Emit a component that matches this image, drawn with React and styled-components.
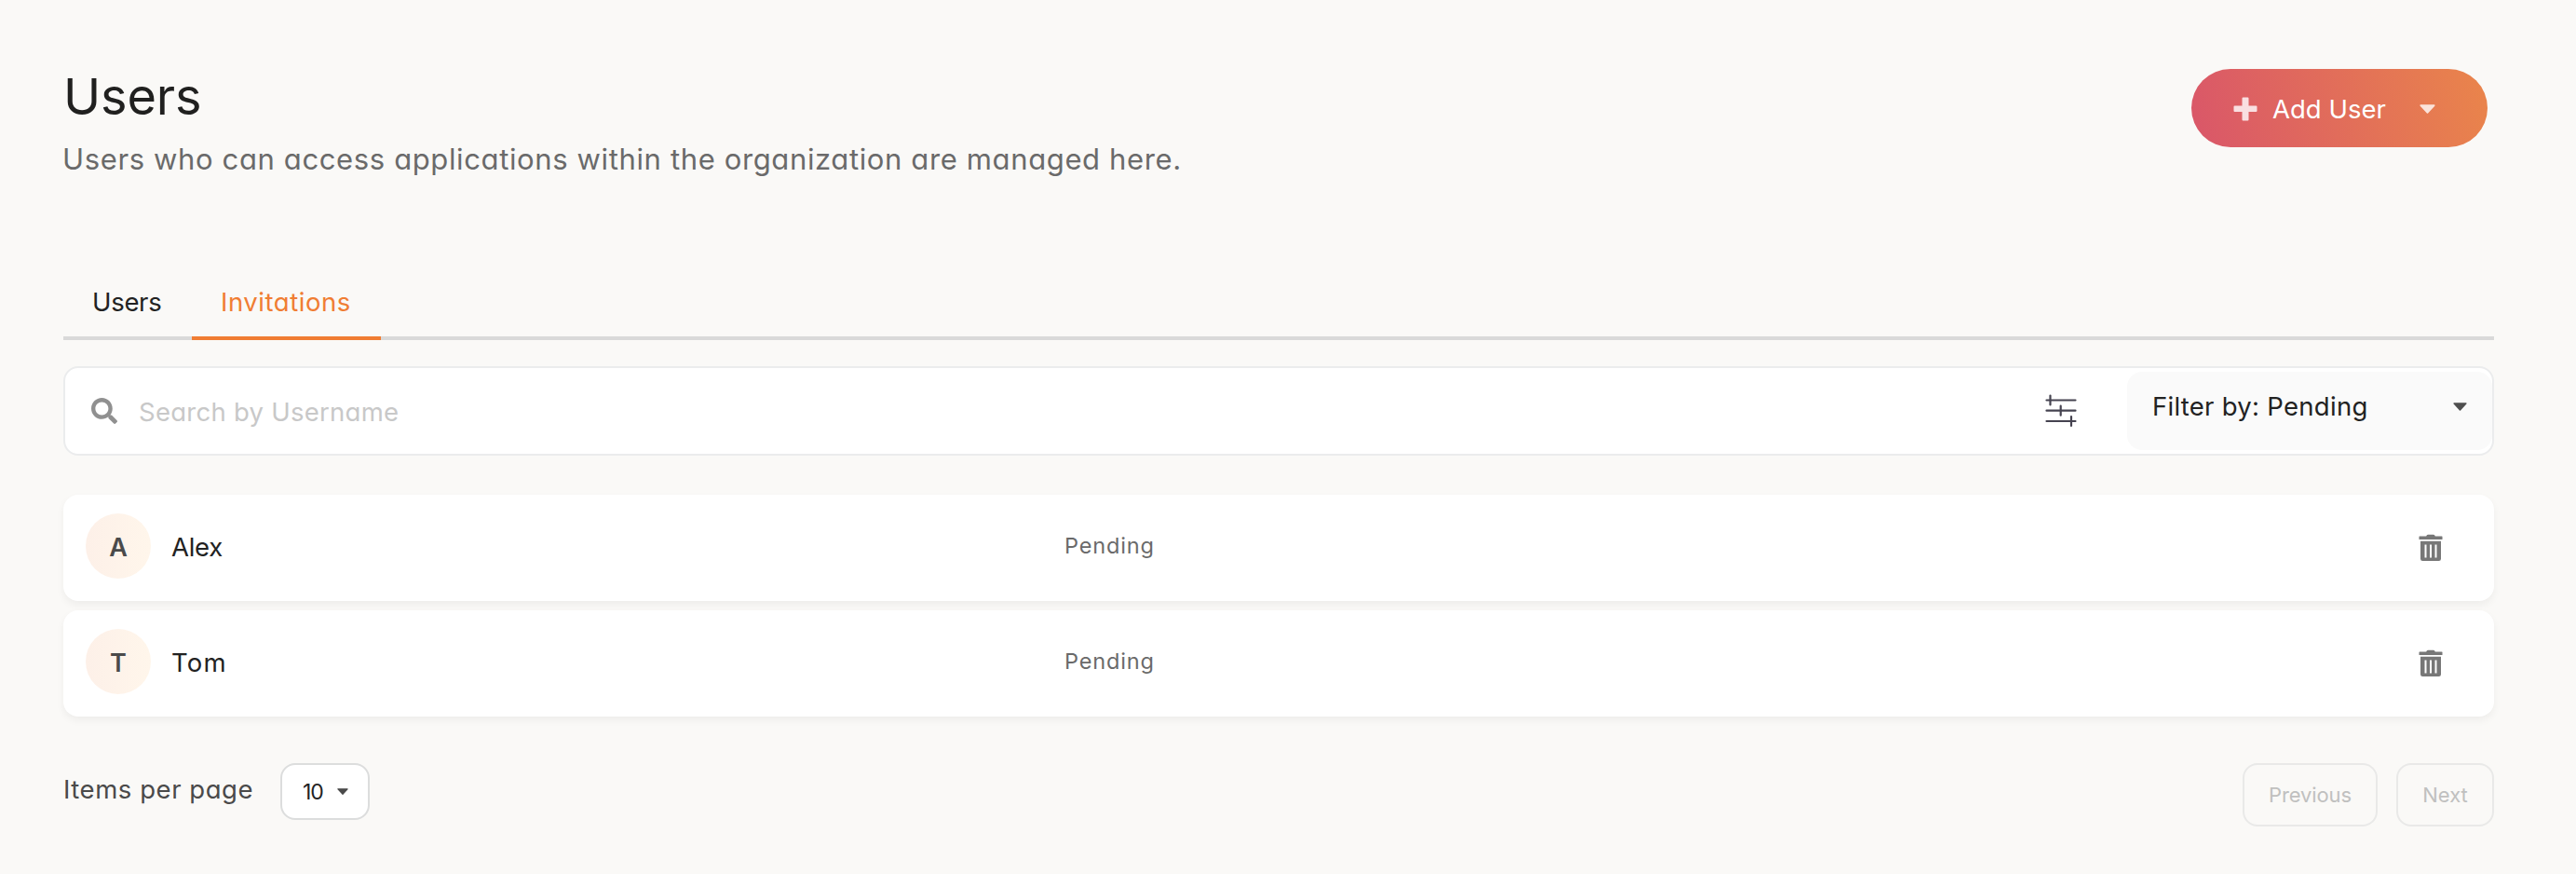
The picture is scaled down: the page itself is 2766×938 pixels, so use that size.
import React from 'react';
import styled, { createGlobalStyle } from 'styled-components';
import { FaSearch } from 'react-icons/fa';

const GlobalStyle = createGlobalStyle`
  * { box-sizing: border-box; }
  body {
    margin: 0;
    background: #faf9f7;
    font-family: Inter, "Liberation Sans", sans-serif;
    font-weight: 400;
    font-feature-settings: "cv11";
    color: #222;
  }
  button { font: inherit; font-feature-settings: inherit; }
`;

const Page = styled.main`
  min-height: 938px;
  padding: 74px 88px 0 68px;
`;

const Header = styled.header`
  display: flex;
  justify-content: space-between;
  align-items: flex-start;
  height: 209px;
  padding-right: 7px;
`;

const Title = styled.h1`
  margin: 0;
  padding-top: 1px;
  font-size: 54px;
  font-weight: 400;
  line-height: 58px;
  letter-spacing: -0.15px;
  color: #20201f;
`;

const Subtitle = styled.p`
  margin: 18px 0 0 -1px;
  font-size: 31px;
  line-height: 40px;
  letter-spacing: 0.63px;
  color: #6a6a6a;
  white-space: nowrap;
`;

const AddButton = styled.button`
  display: flex;
  align-items: center;
  width: 318px;
  height: 84px;
  padding: 1px 56px 0 45px;
  border: 0;
  border-radius: 42px;
  background: linear-gradient(75deg, #da5868 4%, #e9834c 96%);
  color: #fff;
  font-size: 27.5px;
  letter-spacing: 0.01px;
`;

const AddLabel = styled.span`
  flex: 1;
  margin-left: 16px;
  line-height: 40px;
  text-align: left;
`;

const Tabs = styled.nav`
  display: flex;
  height: 82px;
  box-shadow: inset 0 -4px 0 #d9d9d9;
`;

const Tab = styled.button`
  width: ${(p) => p.$width}px;
  padding: 4px 0 0 31px;
  border: 0;
  border-bottom: 4px solid ${(p) => (p.$active ? '#f07d33' : 'transparent')};
  background: none;
  text-align: left;
  font-size: 27.5px;
  letter-spacing: ${(p) => p.$track}px;
  color: ${(p) => (p.$active ? '#f07d33' : '#222')};
`;

const SearchBar = styled.div`
  display: flex;
  align-items: center;
  height: 96px;
  margin-top: 28px;
  border: 2px solid #ebeced;
  border-radius: 16px;
  background: #fff;
`;

const SearchIcon = styled(FaSearch)`
  width: 28px;
  height: 28px;
  margin: 0 23px 1px 28px;
  color: #909090;
`;

const Placeholder = styled.span`
  flex: 1;
  padding-top: 2px;
  font-size: 27.5px;
  letter-spacing: 0.26px;
  color: #c8c8c8;
`;

const FilterSelect = styled.button`
  display: flex;
  align-items: center;
  justify-content: space-between;
  width: 392px;
  height: 84px;
  margin-left: 54px;
  padding: 0 27px 10px;
  border: 0;
  border-radius: 16px;
  background: #fafafa;
  color: #222;
  font-size: 27.5px;
  letter-spacing: 0.28px;
`;

const List = styled.section`
  display: grid;
  gap: 10px;
  margin-top: 42px;
`;

const Row = styled.article`
  display: flex;
  align-items: center;
  height: 114px;
  padding: 0 55px 0 24px;
  border-radius: 16px;
  background: #fff;
  box-shadow: 0 4px 8px rgba(0, 0, 0, 0.05);
`;

const Avatar = styled.div`
  display: grid;
  place-items: center;
  width: 70px;
  height: 70px;
  margin-bottom: 4px;
  padding-top: 2px;
  border-radius: 50%;
  background: linear-gradient(90deg, #fdf0e8, #fff6eb);
  color: #4a4a4a;
  font-size: 27px;
  font-weight: 600;
`;

const Name = styled.span`
  width: 959px;
  margin-left: 22px;
  padding-bottom: 2px;
  font-size: 27.5px;
  letter-spacing: ${(p) => p.$track}px;
`;

const Status = styled.span`
  flex: 1;
  padding-bottom: 5px;
  font-size: 23.5px;
  letter-spacing: 0.84px;
  color: #6a6a6a;
`;

const Footer = styled.footer`
  display: flex;
  align-items: flex-start;
  margin-top: 50px;
`;

const PageLabel = styled.span`
  width: 233px;
  line-height: 57px;
  font-size: 27.5px;
  letter-spacing: 0.55px;
  color: #4a4a4a;
`;

const PageSize = styled.button`
  display: flex;
  align-items: center;
  justify-content: space-between;
  width: 96px;
  height: 61px;
  margin-right: auto;
  padding: 0 21px 0 22px;
  border: 2px solid #dcdddd;
  border-radius: 16px;
  background: #fff;
  color: #222;
  font-size: 23px;
  letter-spacing: -1px;
`;

const PagerButton = styled.button`
  width: ${(p) => p.$width}px;
  height: 68px;
  margin-left: 20px;
  padding: 0;
  border: 2px solid #e9e9e8;
  border-radius: 16px;
  background: none;
  color: #c0c0bf;
  font-size: 22px;
  letter-spacing: ${(p) => p.$track}px;
`;

const Glyph = styled.svg`
  display: block;
  flex: none;
`;

const PlusIcon = () => (
  <Glyph width="26" height="26" viewBox="0 0 26 26" fill="#f9dfe1">
    <path d="M10.5 .5h5q1 0 1 1v8h8q1 0 1 1v4.500q0 1-1 1h-8v8.500q0 1-1 1h-5q-1 0-1-1v-8.500h-8q-1 0-1-1v-4.500q0-1 1-1h8v-8q0-1 1-1z" />
  </Glyph>
);

const Caret = ({ width, height, color }) => (
  <Glyph width={width} height={height} viewBox="0 0 16 9" preserveAspectRatio="none">
    <path d="M1.200 1h13.600L8 8z" fill={color} stroke={color} strokeWidth="1.600" strokeLinejoin="round" />
  </Glyph>
);

const SlidersIcon = () => (
  <Glyph width="34" height="36" viewBox="0 0 34 36" stroke="#454350" strokeWidth="2.200" strokeLinecap="round">
    <path d="M1.500 6.500h31M1.500 17.700h31M1.500 29h31M5.500 1.500v10M16.700 12.700v10M28 24v10" />
  </Glyph>
);

const TrashIcon = () => (
  <Glyph width="26" height="30" viewBox="0 0 26 30" fill="#777">
    <path d="M1 2.500h7.200Q8.700 .8 10 .8h6q1.300 0 1.800 1.700H25q.5 0 .5.500v3H.5V3q0-.5.500-.5z" />
    <path
      fillRule="evenodd"
      d="M2 7.700h22v19q0 2.300-2.300 2.300H4.300Q2 29 2 26.700zM6.500 11.500v14h2v-14zM12 11.500v14h2v-14zM17.500 11.500v14h2v-14z"
    />
  </Glyph>
);

const invitations = [
  { name: 'Alex', track: -0.3 },
  { name: 'Tom', track: 1.2 },
];

export default function App() {
  return (
    <>
      <GlobalStyle />
      <Page>
        <Header>
          <div>
            <Title>Users</Title>
            <Subtitle>Users who can access applications within the organization are managed here.</Subtitle>
          </div>
          <AddButton>
            <PlusIcon />
            <AddLabel>Add User</AddLabel>
            <Caret width={17} height={10} color="#fbe3da" />
          </AddButton>
        </Header>

        <Tabs>
          <Tab $width={138} $track={-0.3}>Users</Tab>
          <Tab $width={203} $track={0.55} $active>Invitations</Tab>
        </Tabs>

        <SearchBar>
          <SearchIcon />
          <Placeholder>Search by Username</Placeholder>
          <SlidersIcon />
          <FilterSelect>
            Filter by: Pending
            <Caret width={15} height={9} color="#4f4f4f" />
          </FilterSelect>
        </SearchBar>

        <List>
          {invitations.map(({ name, track }) => (
            <Row key={name}>
              <Avatar>{name[0]}</Avatar>
              <Name $track={track}>{name}</Name>
              <Status>Pending</Status>
              <TrashIcon />
            </Row>
          ))}
        </List>

        <Footer>
          <PageLabel>Items per page</PageLabel>
          <PageSize>
            10
            <Caret width={12} height={7} color="#4a4a4a" />
          </PageSize>
          <PagerButton $width={145} $track={-0.1}>Previous</PagerButton>
          <PagerButton $width={105} $track={0.05}>Next</PagerButton>
        </Footer>
      </Page>
    </>
  );
}
